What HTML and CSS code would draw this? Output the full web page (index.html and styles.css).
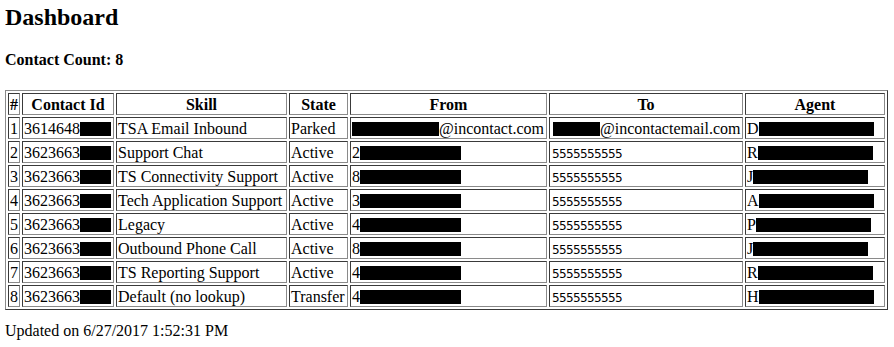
FILE: index.html
```html
<!DOCTYPE html>
<html>
<head>
<meta charset="utf-8">
<title>Dashboard</title>
<link rel="stylesheet" href="styles.css">
</head>
<body>
<h1 class="title">Dashboard</h1>
<h4 class="count">Contact Count: 8</h4>
<table class="contacts">
  <thead>
    <tr>
      <th class="c-num">#</th>
      <th class="c-id">Contact Id</th>
      <th class="c-skill">Skill</th>
      <th class="c-state">State</th>
      <th class="c-from">From</th>
      <th class="c-to">To</th>
      <th class="c-agent">Agent</th>
    </tr>
  </thead>
  <tbody>
    <tr>
      <td>1</td>
      <td>3614648<span class="redact r-id"></span></td>
      <td>TSA Email Inbound</td>
      <td>Parked</td>
      <td><span class="redact r-mail-from"></span>@incontact.com</td>
      <td><span class="redact r-mail-to"></span>@incontactemail.com</td>
      <td>D<span class="redact r-agent"></span></td>
    </tr>
    <tr>
      <td>2</td>
      <td>3623663<span class="redact r-id"></span></td>
      <td>Support Chat</td>
      <td>Active</td>
      <td>2<span class="redact r-from"></span></td>
      <td class="phone">5555555555</td>
      <td>R<span class="redact r-agent"></span></td>
    </tr>
    <tr>
      <td>3</td>
      <td>3623663<span class="redact r-id"></span></td>
      <td>TS Connectivity Support</td>
      <td>Active</td>
      <td>8<span class="redact r-from"></span></td>
      <td class="phone">5555555555</td>
      <td>J<span class="redact r-agent"></span></td>
    </tr>
    <tr>
      <td>4</td>
      <td>3623663<span class="redact r-id"></span></td>
      <td>Tech Application Support</td>
      <td>Active</td>
      <td>3<span class="redact r-from"></span></td>
      <td class="phone">5555555555</td>
      <td>A<span class="redact r-agent"></span></td>
    </tr>
    <tr>
      <td>5</td>
      <td>3623663<span class="redact r-id"></span></td>
      <td>Legacy</td>
      <td>Active</td>
      <td>4<span class="redact r-from"></span></td>
      <td class="phone">5555555555</td>
      <td>P<span class="redact r-agent"></span></td>
    </tr>
    <tr>
      <td>6</td>
      <td>3623663<span class="redact r-id"></span></td>
      <td>Outbound Phone Call</td>
      <td>Active</td>
      <td>8<span class="redact r-from"></span></td>
      <td class="phone">5555555555</td>
      <td>J<span class="redact r-agent"></span></td>
    </tr>
    <tr>
      <td>7</td>
      <td>3623663<span class="redact r-id"></span></td>
      <td>TS Reporting Support</td>
      <td>Active</td>
      <td>4<span class="redact r-from"></span></td>
      <td class="phone">5555555555</td>
      <td>R<span class="redact r-agent"></span></td>
    </tr>
    <tr>
      <td>8</td>
      <td>3623663<span class="redact r-id"></span></td>
      <td>Default (no lookup)</td>
      <td>Transfer</td>
      <td>4<span class="redact r-from"></span></td>
      <td class="phone">5555555555</td>
      <td>H<span class="redact r-agent"></span></td>
    </tr>
  </tbody>
</table>
<p class="updated">Updated on 6/27/2017 1:52:31 PM</p>
</body>
</html>
```

FILE: styles.css
```css
html, body {
  background: #ffffff;
}

body {
  margin: 0 5px;
  font-family: "Liberation Serif", "Times New Roman", serif;
  font-size: 16px;
  color: #000000;
}

.title {
  margin: 3px 0 0;
  font-size: 24px;
  line-height: 28px;
  font-weight: bold;
}

.count {
  margin: 20px 0 0;
  font-size: 16px;
  line-height: 18px;
  font-weight: bold;
}

.contacts {
  margin-top: 21px;
  box-sizing: border-box;
  width: 883px;
  table-layout: fixed;
  border-collapse: separate;
  border-spacing: 2px;
  border: 1px solid;
  border-color: #8a8a8a #3a3a3a #3a3a3a #8a8a8a;
}

.contacts th,
.contacts td {
  box-sizing: border-box;
  padding: 2px 1px 0 1px;
  border: 1px solid;
  border-color: #3a3a3a #8a8a8a #8a8a8a #3a3a3a;
  line-height: 18px;
  height: 22px;
  white-space: nowrap;
  overflow: hidden;
}

.contacts th {
  font-weight: bold;
  text-align: center;
}

.contacts td {
  text-align: left;
}

.c-num { width: 12px; }
.c-id { width: 92px; }
.c-skill { width: 171px; }
.c-state { width: 59px; }
.c-from { width: 197px; }
.c-to { width: 194px; }
.c-agent { width: 140px; }

.redact {
  display: inline-block;
  height: 14px;
  background: #000000;
  vertical-align: -2px;
}

.r-id { width: 31px; }
.r-mail-from { width: 87px; }
.r-mail-to { width: 47px; margin-left: 2px; }
.r-from { width: 101px; }
.r-agent { width: 115px; }

.contacts td.phone {
  font-family: "DejaVu Sans", Verdana, sans-serif;
  font-size: 12px;
  letter-spacing: -0.63px;
  line-height: 16px;
  padding: 4px 1px 0 2px;
}

.updated {
  margin: 12px 0 0;
  line-height: 18px;
}
```
